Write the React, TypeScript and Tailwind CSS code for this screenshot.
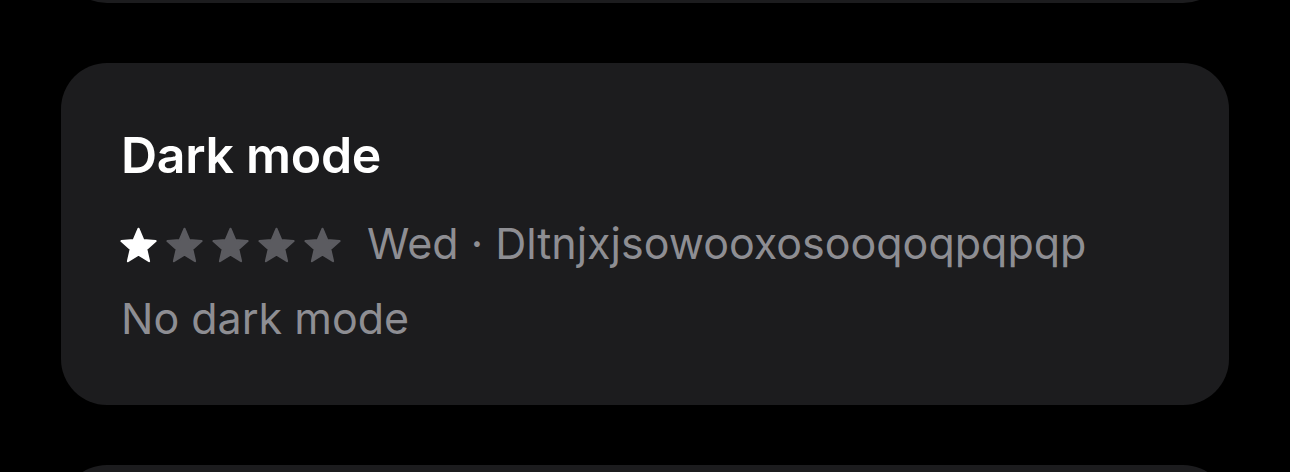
import React from 'react';

function Star({ filled }: { filled: boolean }) {
  const c = filled ? '#ffffff' : '#5b5b60';
  return (
    <svg viewBox="0 0 24 24" className="h-[41px] w-[41px]" fill={c}>
      <path
        stroke={c}
        strokeWidth="1.2"
        strokeLinejoin="round"
        d="M12 2.2l2.85 6.6 7.15.62-5.42 4.72 1.62 7.02L12 17.4l-6.2 3.76 1.62-7.02L2 9.42l7.15-.62z"
      />
    </svg>
  );
}

function ReviewCard({ title, rating, meta, body }: { title: string; rating: number; meta: string; body: string }) {
  return (
    <div className="bg-[#1c1c1e] rounded-[46px] h-[342px] px-[60px] pt-[64px]">
      <h2 className="text-white font-semibold text-[50px] leading-[56px] tracking-[-0.3px]">{title}</h2>
      <div className="flex items-start mt-[35px] h-[50px]">
        <div className="flex gap-[5px] -ml-[3px] mt-[7px]">
          {[1, 2, 3, 4, 5].map(i => (
            <Star key={i} filled={i <= rating} />
          ))}
        </div>
        <span className="ml-[24px] text-[#8e8e93] text-[43px] leading-[50px] whitespace-nowrap">{meta}</span>
      </div>
      <p className="text-[#8e8e93] text-[43px] leading-[50px] mt-[25px]">{body}</p>
    </div>
  );
}

export default function App() {
  return (
    <div className="bg-black h-[472px] w-[1290px] overflow-hidden px-[61px]" style={{ fontFamily: 'Inter, "Noto Sans", sans-serif' }}>
      <div className="bg-[#1c1c1e] rounded-[46px] h-[100px] -mt-[97px]" />
      <div className="mt-[60px]">
        <ReviewCard
          title="Dark mode"
          rating={1}
          meta="Wed · Dltnjxjsowooxosooqoqpqpqp"
          body="No dark mode"
        />
      </div>
      <div className="bg-[#1c1c1e] rounded-[46px] h-[200px] mt-[60px]" />
    </div>
  );
}
